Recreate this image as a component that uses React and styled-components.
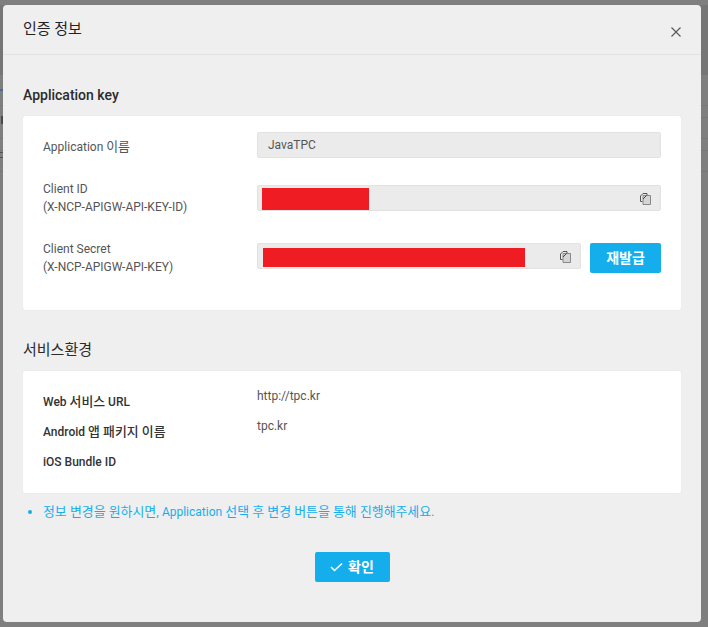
import styled, { createGlobalStyle } from "styled-components";

const GlobalStyle = createGlobalStyle`
  html, body {
    margin: 0;
    padding: 0;
    background: #7f7f7f;
  }
  body {
    font-family: Roboto, "Noto Sans CJK KR", sans-serif;
    font-size: 12px;
    color: #333;
  }
`;

// page behind the dimmed overlay: only its table lines and a few letters show at the edges
const Backdrop = styled.div`
  width: 708px;
  height: 627px;
  box-sizing: border-box;
  padding: 5px 7px 5px 3px;
  overflow: hidden;
  background:
    linear-gradient(#4a6a90, #4a6a90) 0 89px / 3px 2px no-repeat,
    linear-gradient(#4a4a4a, #4a4a4a) 1px 116px / 2px 8px no-repeat,
    linear-gradient(#55504a, #55504a) 0 152px / 3px 1px no-repeat,
    linear-gradient(#55504a, #55504a) 0 157px / 3px 1px no-repeat,
    linear-gradient(#777, #777) 0 105px / 100% 1px no-repeat,
    linear-gradient(#777, #777) 0 117px / 100% 1px no-repeat,
    linear-gradient(#777, #777) 0 138px / 100% 1px no-repeat,
    linear-gradient(#777, #777) 0 150px / 100% 1px no-repeat,
    linear-gradient(#777, #777) 0 171px / 100% 1px no-repeat,
    linear-gradient(#767676, #767676) 0 5px / 100% 70px no-repeat,
    #7f7f7f;
`;

const Modal = styled.div`
  height: 617px;
  background: #efefef;
  border-radius: 4px;
  display: flex;
  flex-direction: column;
`;

const ModalHeader = styled.header`
  height: 49px;
  flex: none;
  border-bottom: 1px solid #e2e2e2;
  padding: 0 20px;
  display: flex;
  justify-content: space-between;
  align-items: center;
`;

const ModalTitle = styled.h1`
  margin: -4px 0 0;
  font-size: 15px;
  font-weight: 400;
  color: #222;
`;

const CloseButton = styled.button`
  border: 0;
  background: none;
  padding: 0;
  width: 10px;
  height: 10px;
  margin: 4px 0 0;
  display: block;
  svg {
    display: block;
  }
`;

const ModalBody = styled.div`
  padding: 0 20px;
  display: flex;
  flex-direction: column;
`;

const SectionTitle = styled.h2`
  margin: ${(p) => p.$top}px 0 ${(p) => p.$bottom}px;
  height: 20px;
  line-height: 20px;
  font-size: ${(p) => p.$size}px;
  font-weight: ${(p) => p.$weight};
  color: #2b2b2b;
`;

const Card = styled.section`
  background: #fff;
  box-shadow: 0 0 0 1px #ececec;
  border-radius: 3px;
  box-sizing: border-box;
  height: ${(p) => p.$height}px;
  padding: ${(p) => p.$pad};
  display: flex;
  flex-direction: column;
`;

const KeyRow = styled.div`
  display: grid;
  grid-template-columns: 214px 1fr;
  grid-template-rows: ${(p) => p.$height}px;
  align-items: center;
  margin-bottom: ${(p) => p.$gap}px;
`;

const KeyLabel = styled.div`
  font-size: 12px;
  line-height: 18px;
  color: #555;
  margin-top: ${(p) => p.$shift || 0}px;
`;

// hangul runs are set a size up, the reference's fallback font is wider than Noto
const Ko = styled.span`
  font-size: 12.9px;
`;

const FieldLine = styled.div`
  display: flex;
  gap: 9px;
  align-items: flex-start;
`;

const Field = styled.div`
  flex: 1;
  height: 26px;
  background: #ebebeb;
  border: 1px solid #e2e2e2;
  border-radius: 2px;
  position: relative;
  display: flex;
  align-items: center;
  padding: 0 14px 0 10px;
  font-size: 12px;
  color: #555;
  box-sizing: border-box;
`;

const Redaction = styled.div`
  background: #f01c24;
  height: ${(p) => p.$height}px;
  width: ${(p) => p.$width}px;
  margin-left: ${(p) => p.$left}px;
  margin-top: ${(p) => p.$top}px;
`;

const CopyIcon = styled.svg`
  position: absolute;
  right: 9px;
  top: 7px;
`;

const ReissueButton = styled.button`
  width: 71px;
  height: 30px;
  flex: none;
  border: 0;
  border-radius: 2px;
  background: #14aeec;
  color: #fff;
  font-family: inherit;
  font-size: 14px;
  font-weight: 700;
  padding: 0 0 2px;
`;

const ServiceRow = styled.div`
  display: grid;
  grid-template-columns: 214px 1fr;
  height: 30px;
`;

const ServiceLabel = styled.div`
  font-size: 12px;
  font-weight: 500;
  line-height: 18px;
  padding-top: 6px;
  color: #333;
`;

const ServiceValue = styled.div`
  font-size: 12px;
  line-height: 18px;
  color: #555;
`;

const Notice = styled.p`
  margin: 11px 0 0 5px;
  font-size: 12px;
  line-height: 16px;
  color: #14aeec;
  display: flex;
  align-items: center;
  white-space: pre;
  &::before {
    content: "";
    width: 4px;
    height: 4px;
    border-radius: 50%;
    background: #14aeec;
    margin-right: 11px;
  }
`;

const ConfirmLine = styled.div`
  display: flex;
  justify-content: center;
  margin-top: 32px;
`;

const ConfirmButton = styled.button`
  width: 75px;
  height: 30px;
  border: 0;
  border-radius: 2px;
  background: #14aeec;
  color: #fff;
  font-family: inherit;
  font-size: 14px;
  font-weight: 700;
  padding: 0;
  display: flex;
  align-items: center;
  justify-content: center;
  gap: 5px;
  span {
    margin-top: -3px;
  }
`;

function Copy() {
  return (
    <CopyIcon width="11" height="12" viewBox="0 0 11 12" fill="none">
      <path d="M2.5 8.5H.5V3L3 .5h4V2" stroke="#555" />
      <path d="M3 2.5h7.5v9H3z" fill="#d5d5d5" stroke="#888" />
      <path d="M3 6l3.5-3.5" stroke="#444" />
    </CopyIcon>
  );
}

function App() {
  return (
    <>
      <GlobalStyle />
      <Backdrop>
        <Modal>
          <ModalHeader>
            <ModalTitle>인증 정보</ModalTitle>
            <CloseButton aria-label="닫기">
              <svg width="10" height="10" viewBox="0 0 10 10">
                <path d="M.5.5l9 9M9.5.5l-9 9" stroke="#555" strokeWidth="1.1" />
              </svg>
            </CloseButton>
          </ModalHeader>
          <ModalBody>
            <SectionTitle $top={30} $bottom={11} $size={14} $weight={500}>Application key</SectionTitle>
            <Card $height={194} $pad="16px 20px 0">
              <KeyRow $height={26} $gap={27}>
                <KeyLabel $shift={4}>Application <Ko>이름</Ko></KeyLabel>
                <Field>JavaTPC</Field>
              </KeyRow>
              <KeyRow $height={26} $gap={32}>
                <KeyLabel>
                  Client ID
                  <br />
                  (X-NCP-APIGW-API-KEY-ID)
                </KeyLabel>
                <Field>
                  <Redaction $width={107} $height={22} $left={-6} $top={2} />
                  <Copy />
                </Field>
              </KeyRow>
              <KeyRow $height={30} $gap={0}>
                <KeyLabel>
                  Client Secret
                  <br />
                  (X-NCP-APIGW-API-KEY)
                </KeyLabel>
                <FieldLine>
                  <Field>
                    <Redaction $width={262} $height={19} $left={-5} $top={3} />
                    <Copy />
                  </Field>
                  <ReissueButton>재발급</ReissueButton>
                </FieldLine>
              </KeyRow>
            </Card>
            <SectionTitle $top={30} $bottom={11} $size={15} $weight={400}>서비스환경</SectionTitle>
            <Card $height={122} $pad="16px 20px 0">
              <ServiceRow>
                <ServiceLabel>Web <Ko>서비스</Ko> URL</ServiceLabel>
                <ServiceValue>http://tpc.kr</ServiceValue>
              </ServiceRow>
              <ServiceRow>
                <ServiceLabel>Android <Ko>앱 패키지 이름</Ko></ServiceLabel>
                <ServiceValue>tpc.kr</ServiceValue>
              </ServiceRow>
              <ServiceRow>
                <ServiceLabel>iOS Bundle ID</ServiceLabel>
                <ServiceValue />
              </ServiceRow>
            </Card>
            <Notice>
              <Ko>정보 변경을 원하시면, </Ko>Application<Ko> 선택 후 변경 버튼을 통해 진행해주세요.</Ko>
            </Notice>
            <ConfirmLine>
              <ConfirmButton>
                <svg width="13" height="10" viewBox="0 0 13 10" fill="none">
                  <path d="M1 5l3.5 3.5L12 1.5" stroke="#fff" strokeWidth="1.6" />
                </svg>
                <span>확인</span>
              </ConfirmButton>
            </ConfirmLine>
          </ModalBody>
        </Modal>
      </Backdrop>
    </>
  );
}

export default App;
